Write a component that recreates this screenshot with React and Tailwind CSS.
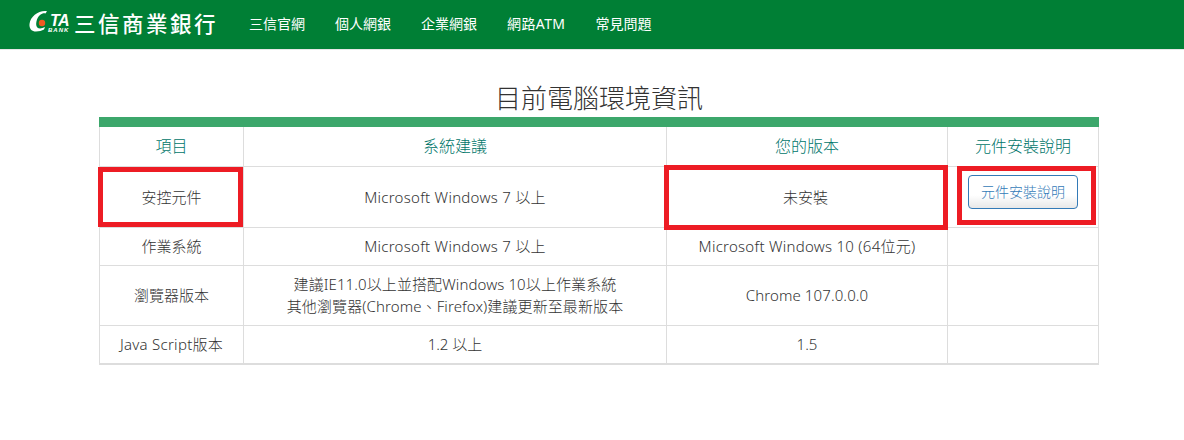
const NAV = ["三信官網", "個人網銀", "企業網銀", "網路ATM", "常見問題"];
const RED = "absolute border-[5px] border-[#ed1c24] pointer-events-none";
const TH = "border border-[#dddddd] font-light text-[#00766a] text-[16px] text-center align-middle p-0";
const TD = "border border-[#dddddd] text-center align-middle p-0 text-[15px] leading-[20px] font-light";

function Logo() {
  return (
    <div className="flex items-center">
      <div className="relative w-[45px] h-[28px]">
        <svg className="absolute left-0 top-0" width="45" height="28" viewBox="0 0 45 28">
          <path d="M18 1.2 C10 0 1.5 6 0.5 14 C0 19 3 21.5 7 21.5 C10 21.5 13 20.5 15 19.5 L16 17 C13 18.5 10 19 8.3 17.5 C6 15 7.5 8 11 5 C13 3.2 15 3 16.5 3.4 Z" fill="#fff" />
          <circle cx="13" cy="13" r="3.2" fill="#f15a22" />
        </svg>
        <span className="absolute left-[21px] top-[5px] text-white italic font-bold text-[16px] leading-[12px] font-['Liberation_Sans'] tracking-[-0.5px]">TA</span>
        <span className="absolute left-[19px] top-[17px] text-white italic font-bold text-[6px] leading-[6px] font-['Liberation_Sans'] tracking-[1px]">BANK</span>
      </div>
      <span className="text-white text-[21.5px] leading-[28px] tracking-[2.5px] font-medium whitespace-nowrap">三信商業銀行</span>
    </div>
  );
}

export default function App() {
  return (
    <div className="w-[1184px] h-[440px] bg-white overflow-hidden font-['Noto_Sans','Noto_Sans_CJK_TC',sans-serif] text-[#333333]">
      <header className="h-[50px] bg-[#007f35] border-b border-[#e7e7e7] flex items-center pl-[29px] pb-[1px]">
        <Logo />
        <nav className="flex ml-[31px] gap-[30px] text-white text-[14px] leading-[20px]">
          <a className="whitespace-nowrap">{NAV[0]}</a>
          <a className="whitespace-nowrap">{NAV[1]}</a>
          <a className="whitespace-nowrap">{NAV[2]}</a>
          <a className="whitespace-nowrap tracking-[0.4px]">{NAV[3]}</a>
          <a className="whitespace-nowrap">{NAV[4]}</a>
        </nav>
      </header>
      <main className="w-[1000px] ml-[99px]">
        <h1 className="h-[67px] pt-[30px] text-center text-[26px] leading-[36px] font-light text-[#333333]">目前電腦環境資訊</h1>
        <div className="relative">
          <table className="w-[999px] table-fixed border-collapse border-t-[10px] border-t-[#3ca76b] border-b-2 border-b-[#dddddd]">
            <colgroup>
              <col className="w-[144px]" />
              <col className="w-[423px]" />
              <col className="w-[281px]" />
              <col className="w-[151px]" />
            </colgroup>
            <thead>
              <tr className="h-[44px]">
                <th className={TH}>項目</th>
                <th className={TH}>系統建議</th>
                <th className={TH}>您的版本</th>
                <th className={TH}>元件安裝說明</th>
              </tr>
            </thead>
            <tbody>
              <tr className="h-[61px]">
                <td className={TD}>安控元件</td>
                <td className={TD + " tracking-[0.27px]"}>Microsoft Windows 7 以上</td>
                <td className={TD + " pr-[3px]"}>未安裝</td>
                <td className={TD + " align-top"}>
                  <button className="block mx-auto mt-[8px] w-[110px] h-[34px] rounded-[4px] border border-[#337ab7] text-[#337ab7] text-[14px] font-light bg-gradient-to-b from-white from-60% to-[#e8e8e8]">元件安裝說明</button>
                </td>
              </tr>
              <tr className="h-[38px]">
                <td className={TD}>作業系統</td>
                <td className={TD + " tracking-[0.27px]"}>Microsoft Windows 7 以上</td>
                <td className={TD + " tracking-[0.27px]"}>Microsoft Windows 10 (64位元)</td>
                <td className={TD}></td>
              </tr>
              <tr className="h-[60px]">
                <td className={TD}>瀏覽器版本</td>
                <td className={TD + " leading-[22px] tracking-[0.1px]"}>建議IE11.0以上並搭配Windows 10以上作業系統<br />其他瀏覽器(Chrome、Firefox)建議更新至最新版本</td>
                <td className={TD + " tracking-[0.12px]"}>Chrome 107.0.0.0</td>
                <td className={TD}></td>
              </tr>
              <tr className="h-[39px]">
                <td className={TD + " tracking-[0.27px]"}>Java Script版本</td>
                <td className={TD}>1.2 以上</td>
                <td className={TD}>1.5</td>
                <td className={TD}></td>
              </tr>
            </tbody>
          </table>
          <div className={RED + " left-[-1px] top-[50px] w-[145px] h-[60px]"} />
          <div className={RED + " left-[565px] top-[48px] w-[284px] h-[65px]"} />
          <div className={RED + " left-[858px] top-[49px] w-[139px] h-[59px]"} />
        </div>
      </main>
    </div>
  );
}
